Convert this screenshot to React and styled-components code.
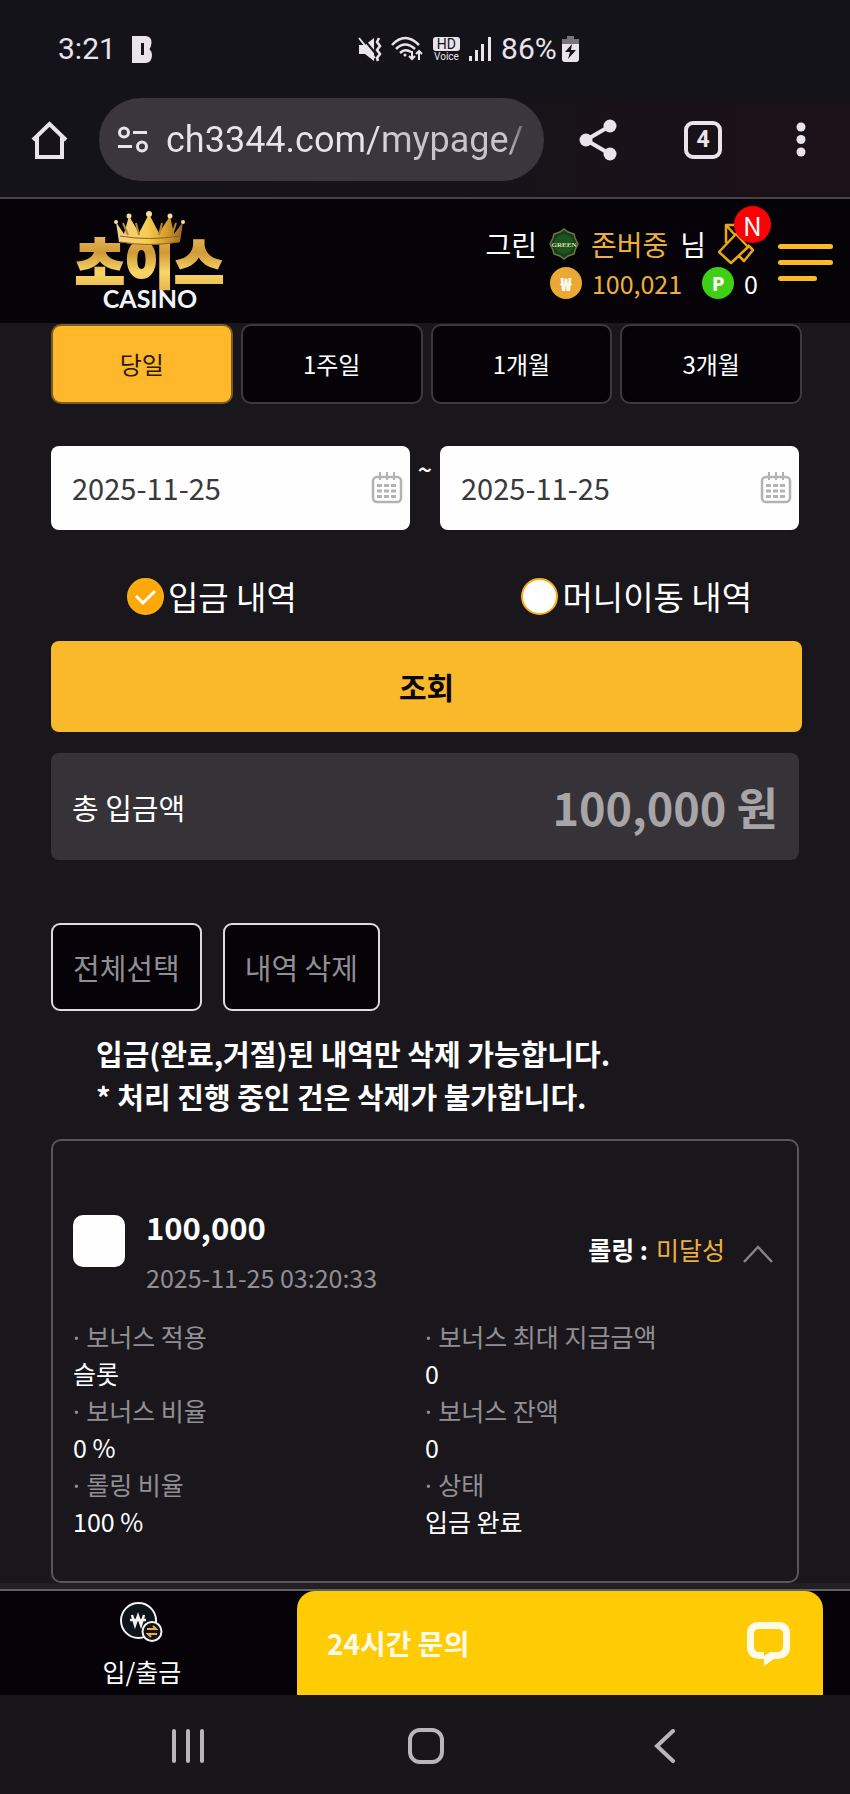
import React, { useState } from "react";
import styled, { createGlobalStyle, css } from "styled-components";

const color = {
  page: "#19171c",
  chrome: "#141319",
  black: "#050308",
  gold: "#f9b92a",
  amber: "#eeb03c",
  muted: "#918f93",
  icon: "#e9e4ec",
};

const GlobalStyle = createGlobalStyle`
  *, *::before, *::after { box-sizing: border-box; }
  body {
    margin: 0;
    background: ${color.page};
    color: #fff;
    font-family: "Noto Sans CJK KR", sans-serif;
    font-size: 25px;
  }
  button, input { font: inherit; color: inherit; margin: 0; }
  button { padding: 0; border: 0; background: none; cursor: pointer; }
  svg { display: block; flex: none; }
  p, h1, h2, dl, dd, dt { margin: 0; font-weight: inherit; font-size: inherit; }
`;

const Phone = styled.div`
  display: flex;
  flex-direction: column;
  min-height: 100vh;
`;

/* ---------- system status ---------- */
const StatusBar = styled.div`
  display: flex;
  align-items: center;
  height: 98px;
  padding: 0 58px;
  background: ${color.chrome};
  color: ${color.icon};
  font: 30px/36px Roboto, sans-serif;
`;
const Clock = styled.time`
  margin-right: 16px;
`;
const StatusIcons = styled.div`
  display: flex;
  align-items: center;
  gap: 9px;
  margin-left: 206px;
`;
const Voice = styled.div`
  display: grid;
  justify-items: center;
  font-size: 10px;
  line-height: 11px;
`;
const Hd = styled.span`
  padding: 0 4px;
  border-radius: 3px;
  background: ${color.icon};
  color: ${color.chrome};
  font-size: 14px;
  line-height: 14px;
`;
const Battery = styled.div`
  display: flex;
  align-items: center;
  gap: 5px;
`;

/* ---------- browser bar ---------- */
const BrowserBar = styled.div`
  display: flex;
  align-items: center;
  height: 101px;
  padding: 0 44px 16px 31px;
  border-bottom: 2px solid #45424a;
  background: linear-gradient(90deg, ${color.chrome} 20%, #1b1119);
  color: ${color.icon};
`;
const AddressPill = styled.div`
  display: flex;
  flex: 1;
  align-items: center;
  gap: 18px;
  min-width: 0;
  height: 83px;
  margin: 0 35px 0 31px;
  padding: 0 16px 0 18px;
  border-radius: 42px;
  background: #3b353d;
`;
const Address = styled.input`
  flex: 1;
  min-width: 0;
  padding: 0;
  border: 0;
  outline: 0;
  background: linear-gradient(90deg, ${color.icon} 55%, #c9c3cb 65%, #c9c3cb 94%, #5a555c);
  background-clip: text;
  color: transparent;
  font: 36px/44px Roboto, sans-serif;
`;
const BrowserActions = styled.div`
  display: flex;
  align-items: center;
`;
const TabCount = styled.button`
  width: 38px;
  height: 38px;
  margin: 0 74px 0 66px;
  border: 4px solid ${color.icon};
  border-radius: 9px;
  font: bold 23px/30px Roboto, sans-serif;
`;

/* ---------- site header ---------- */
const Header = styled.header`
  display: flex;
  justify-content: space-between;
  height: 124px;
  padding: 0 17px 0 75px;
  background: ${color.black};
`;
const Logo = styled.a`
  padding-top: 12px;
`;
const Account = styled.div`
  display: flex;
  gap: 20px;
`;
const AccountInfo = styled.div`
  display: grid;
  align-content: start;
  justify-items: end;
  padding-top: 24px;
`;
const NameRow = styled.div`
  display: flex;
  align-items: center;
  height: 42px;
  gap: 12px;
  padding-right: 4px;
  font-size: 28px;
`;
const BalanceRow = styled.div`
  display: flex;
  align-items: center;
  height: 36px;
  font-size: 25px;
  gap: 10px;
`;
const Gold = styled.span`
  color: ${color.amber};
`;
const Coin = styled.span`
  display: grid;
  place-items: center;
  width: 32px;
  height: 32px;
  margin-left: ${(p) => (p.$spaced ? "10px" : 0)};
  border-radius: 50%;
  background: ${(p) => p.$fill};
  font: 900 18px/32px "Noto Sans CJK KR", sans-serif;
`;
const CouponButton = styled.button`
  position: relative;
`;
const NewBadge = styled.span`
  position: absolute;
  right: -17px;
  top: -17px;
  width: 37px;
  height: 37px;
  border-radius: 50%;
  background: #fb0306;
  color: #fff;
  font-size: 26px;
  line-height: 37px;
`;
const MenuButton = styled.button`
  display: grid;
  align-content: start;
  gap: 11px;
  width: 55px;
  padding-top: 45px;
`;
const MenuLine = styled.span`
  width: ${(p) => (p.$short ? "70%" : "100%")};
  height: 5px;
  border-radius: 3px;
  background: ${color.gold};
`;

/* ---------- search form ---------- */
const Main = styled.main`
  flex: 1;
  padding: 1px 51px 0;
`;
const Periods = styled.div`
  display: grid;
  grid-template-columns: repeat(4, 1fr);
  gap: 8px;
  margin-right: -3px;
`;
const Period = styled.button`
  height: 80px;
  padding-bottom: 2px;
  border: 2px solid #3c3a3e;
  border-radius: 10px;
  background: ${color.black};
  color: #fff;
  font-size: 24px;
  ${(p) =>
    p.$active &&
    css`
      border-color: #7c5c20;
      background: #ffb72b;
      color: #2a1a08;
    `}
`;
const DateRange = styled.div`
  display: flex;
  margin-top: 42px;
`;
const Tilde = styled.span`
  width: 30px;
  color: #fff;
  font-weight: 500;
  text-align: center;
  line-height: 44px;
`;
const DateField = styled.label`
  display: flex;
  flex: 1;
  align-items: center;
  min-width: 0;
  height: 84px;
  padding: 0 7px 0 21px;
  border-radius: 8px;
  background: #fefefe;
`;
const DateInput = styled.input`
  flex: 1;
  min-width: 0;
  padding: 0 0 2px;
  border: 0;
  outline: 0;
  background: none;
  color: #3a383b;
  font-size: 29px;
`;
const Kinds = styled.div`
  display: flex;
  height: 111px;
  padding: 45px 47px 0 76px;
  justify-content: space-between;
  align-items: flex-start;
`;
const Kind = styled.label`
  display: flex;
  align-items: center;
  gap: 4px;
  height: 42px;
  font-size: 33px;
`;
const Radio = styled.input`
  appearance: none;
  width: 37px;
  height: 37px;
  border: 2px solid #f7ae1c;
  border-radius: 50%;
  background: #fff;
  &:checked {
    background: #fca908
      url("data:image/svg+xml,%3Csvg xmlns='http://www.w3.org/2000/svg' viewBox='0 0 33 33'%3E%3Cpath d='M7 16l7 7 12-12' fill='none' stroke='%23fff' stroke-width='3'/%3E%3C/svg%3E")
      center / 33px no-repeat;
  }
`;
const SearchButton = styled.button`
  display: block;
  width: calc(100% + 3px);
  height: 91px;
  padding-bottom: 2px;
  border-radius: 8px;
  background: ${color.gold};
  color: #0b0703;
  font-size: 30px;
  font-weight: bold;
`;
const Total = styled.section`
  display: flex;
  justify-content: space-between;
  align-items: center;
  height: 107px;
  margin-top: 21px;
  padding: 0 21px;
  border-radius: 8px;
  background: #353337;
  font-size: 29px;
`;
const TotalAmount = styled.strong`
  color: #a7a5a8;
  font-size: 45px;
`;

/* ---------- history ---------- */
const ListActions = styled.div`
  display: flex;
  gap: 21px;
  margin-top: 63px;
`;
const OutlineButton = styled.button`
  height: 88px;
  padding: 0 20px;
  border: 2px solid #dddbdf;
  border-radius: 9px;
  background: ${color.black};
  color: ${color.muted};
  font-size: 29px;
`;
const Notice = styled.p`
  padding: 21px 45px;
  font-size: 29px;
  font-weight: bold;
  line-height: 43px;
`;
const Card = styled.article`
  min-height: 444px;
  padding: 74px 20px 0;
  border: 2px solid #58565a;
  border-radius: 10px;
`;
const CardHead = styled.div`
  display: flex;
`;
const Check = styled.input`
  appearance: none;
  width: 52px;
  height: 52px;
  border-radius: 10px;
  background: #fefefe;
`;
const Deposit = styled.div`
  display: grid;
  flex: 1;
  margin-left: 21px;
`;
const Amount = styled.strong`
  font-size: 31px;
  line-height: 24px;
`;
const Stamp = styled.time`
  margin-top: 20px;
  color: ${color.muted};
  line-height: 37px;
`;
const Rolling = styled.button`
  display: flex;
  align-items: center;
  gap: 8px;
  height: 68px;
  padding-right: 4px;
  & svg { margin: 10px 0 0 10px; }
`;
const Details = styled.dl`
  display: grid;
  grid-template-columns: 1fr 1fr;
  margin-top: 22px;
`;
const Term = styled.dt`
  height: 37px;
  color: ${color.muted};
  line-height: 37px;
  &::before {
    content: "· ";
    font-family: "Noto Sans", sans-serif;
  }
`;
const Value = styled.dd`
  height: 37px;
  line-height: 37px;
`;

/* ---------- bottom bars ---------- */
const Dock = styled.footer`
  display: grid;
  grid-template-columns: 35fr 62fr;
  height: 112px;
  padding-right: 27px;
  border-top: 6px solid #222025;
  background: ${color.black};
  box-shadow: inset 0 2px #626065;
`;
const DockLink = styled.a`
  display: grid;
  justify-items: center;
  align-content: start;
  gap: 14px;
  padding: 13px 13px 0 0;
  color: #fff;
  text-decoration: none;
  line-height: 30px;
`;
const ChatButton = styled.button`
  display: flex;
  align-items: center;
  justify-content: space-between;
  height: 104px;
  margin-top: 2px;
  padding: 0 33px 0 30px;
  border-radius: 18px 18px 0 0;
  background: #ffcb05;
  color: #fffbe8;
  font-size: 28px;
  font-weight: bold;
  line-height: 36px;
`;
const SystemNav = styled.nav`
  display: grid;
  grid-template-columns: 1fr 1fr 1fr;
  align-items: center;
  height: 99px;
  padding: 3px 66px 0 69px;
  background: #18161a;
`;
const NavButton = styled.button`
  display: grid;
  place-items: center;
  color: #b9b6bb;
`;

const HomeIcon = () => (
  <svg width="37" height="38" viewBox="0 0 37 38" fill="none" stroke="currentColor" strokeWidth="4">
    <path d="M2 19 18.500 3 35 19M6 16v20h25V16" />
  </svg>
);
const SiteIcon = () => (
  <svg width="31" height="27" viewBox="0 0 31 27" fill="none" stroke="currentColor" strokeWidth="3">
    <circle cx="7" cy="6.500" r="4.500" />
    <circle cx="25" cy="20.500" r="4.500" />
    <path d="M16 6.500h14M1 20.500h14" />
  </svg>
);
const ShareIcon = () => (
  <svg width="39" height="42" viewBox="0 0 39 42">
    <path d="M31 7 7 21l24 14" fill="none" stroke="currentColor" strokeWidth="4" />
    <g fill="currentColor">
      <circle cx="31" cy="7" r="6.500" />
      <circle cx="7" cy="21" r="6.500" />
      <circle cx="31" cy="35" r="6.500" />
    </g>
  </svg>
);
const MoreIcon = () => (
  <svg width="10" height="35" viewBox="0 0 10 35" fill="currentColor">
    <circle cx="5" cy="5" r="4.500" />
    <circle cx="5" cy="17.500" r="4.500" />
    <circle cx="5" cy="30" r="4.500" />
  </svg>
);
const BrandIcon = () => (
  <svg width="20" height="27" viewBox="0 0 20 27">
    <path d="M0 0h14q6 1 5.500 7-.5 4-2 6 2 2 2.500 6 0 7-6 8H0V0Z" fill="currentColor" />
    <path d="M9 7h3v12H9Z" fill={color.chrome} />
  </svg>
);
const MuteIcon = () => (
  <svg width="24" height="25" viewBox="0 0 24 25">
    <path d="M1 8h6l9-7v23L7 17H1Z" fill="currentColor" />
    <path d="m4 0 14 17" stroke={color.chrome} strokeWidth="2" />
    <path d="m1 1 16 20" stroke="currentColor" strokeWidth="2" />
    <path d="m21 1-2 4 3 4-3 4 3 4-3 4 1 3" fill="none" stroke="currentColor" strokeWidth="2.500" />
  </svg>
);
const WifiIcon = () => (
  <svg width="33" height="26" viewBox="0 0 33 26" fill="none" stroke="currentColor" strokeWidth="2.500">
    <path d="M1 9q13-14 27 0M5 13q9-9 19 0M9 17q5-5 11-1" />
    <circle cx="14" cy="19" r="1.500" fill="currentColor" stroke="none" />
    <path d="M21 15v8m-3-3 3 3 3-3M28 24v-9m-3 3 3-3 3 3" strokeWidth="2" />
  </svg>
);
const SignalIcon = () => (
  <svg width="23" height="24" viewBox="0 0 23 24" fill="currentColor">
    <path d="M0 19h3v5H0ZM6 13h3v11H6ZM12 7h3v17h-3ZM19 0h3v24h-3Z" />
  </svg>
);
const BatteryIcon = () => (
  <svg width="17" height="26" viewBox="0 0 17 26">
    <path d="M5 0h7v3h5v6H0V3h5Z" fill="#77747b" />
    <path d="M0 8h17v15q0 3-3 3H3q-3 0-3-3Z" fill="currentColor" />
    <path d="m10 8-7 8h5l-2 7 8-9H9Z" fill={color.chrome} />
  </svg>
);

const LogoArt = () => (
  <svg width="150" height="106" viewBox="0 0 150 106" role="img" aria-label="초이스 CASINO">
    <defs>
      <linearGradient id="goldFill" x1="0" y1="0" x2="0" y2="1">
        <stop offset=".2" stopColor="#e6b653" />
        <stop offset=".4" stopColor="#d09a38" />
        <stop offset=".65" stopColor="#f8d668" />
        <stop offset="1" stopColor="#dfa63a" />
      </linearGradient>
      <linearGradient id="crownFill" x1="0" y1="0" x2="1" y2="0">
        <stop offset="0" stopColor="#f4cf8e" />
        <stop offset=".45" stopColor="#f7cf52" />
        <stop offset=".75" stopColor="#d69d2c" />
        <stop offset="1" stopColor="#9c6820" />
      </linearGradient>
    </defs>
    <text x="0" y="73" fontFamily="Noto Sans CJK KR" fontWeight="900" fontSize="54" fill="url(#goldFill)" stroke="url(#goldFill)" strokeWidth="2">초이스</text>
    <path d="M41 11 49 23 54 5 64 22 74 3 84 22 95 5 99 23 108 11 105 31Q74 37 44 31Z" fill="url(#crownFill)" />
    <path d="m48 12 5 12M61 12l3 12M87 12l-3 12M101 12l-4 12" stroke="#b98432" strokeWidth="2" />
    <path d="M45 25Q74 30 105 25M45 31Q74 36 104 31" fill="none" stroke="#8d5f1c" strokeWidth="1" />
    <g fill="#f6dca0">
      <circle cx="41" cy="11" r="2" /><circle cx="54" cy="5" r="2.500" /><circle cx="74" cy="3" r="3" />
      <circle cx="95" cy="5" r="2.500" /><circle cx="108" cy="11" r="2" />
    </g>
    <text x="75" y="97" textAnchor="middle" fontFamily="Lato" fontWeight="bold" fontSize="25" fill="#f4f4f8">CASINO</text>
  </svg>
);
const GreenBadge = () => (
  <svg width="30" height="32" viewBox="0 0 30 32">
    <path d="m15 1 4 3 6 2 1 4 3 6-3 6-1 4-6 2-4 3-4-3-6-2-1-4-3-6 3-6 1-4 6-2Z" fill="#163c19" stroke="#70773c" strokeWidth="1.500" />
    <circle cx="15" cy="16" r="10" fill="#1d5423" />
    <text x="15" y="19" textAnchor="middle" fontFamily="Liberation Serif" fontWeight="bold" fontSize="7" fill="#dce0a0">GREEN</text>
  </svg>
);
const CouponIcon = () => (
  <svg width="36" height="42" viewBox="0 0 36 42" fill="none" stroke="#e9a713" strokeWidth="2.500" strokeLinejoin="round">
    <path d="M8 20V2h17M8 2l9 10M1 29 18 11l12 13-17 16ZM21 33l5 5 9-11-5-5" />
  </svg>
);
const CalendarIcon = () => (
  <svg width="32" height="32" viewBox="0 0 32 32" fill="none" stroke="#b3b2b4" strokeWidth="2.500">
    <rect x="2" y="5" width="28" height="25" rx="4" />
    <path d="M9 0v8M16 0v8M23 0v8" strokeWidth="2" />
    <path d="M6 13.500h20M6 19h20M6 24.500h20" strokeWidth="3" strokeDasharray="5 2" />
  </svg>
);
const ChevronUp = () => (
  <svg width="30" height="18" viewBox="0 0 30 18" fill="none" stroke="#858387" strokeWidth="2.500">
    <path d="M1 17 15 2l14 15" />
  </svg>
);
const CashIcon = () => (
  <svg width="43" height="40" viewBox="0 0 43 40" fill="none" stroke="#f3f3f3" strokeWidth="2">
    <circle cx="18.500" cy="18.500" r="17.500" fill="#0e1419" />
    <path d="m12 13 3 10 3-9 3 9 3-10M10 18h16" strokeWidth="2.500" />
    <circle cx="32" cy="29.500" r="9.500" fill="#0e1419" />
    <path d="M27 27h9l-3-3M37 32h-9l3 3" stroke="#f0ae35" />
  </svg>
);
const ChatIcon = () => (
  <svg width="43" height="48" viewBox="0 0 43 48">
    <path d="M12 3h19q12 0 12 12v13q0 11-12 12h-4l-10 7v-7h-5Q0 39 0 28V15Q0 3 12 3Z" fill="#fffbe8" />
    <path d="M12 10h19q5 0 5 5v12q0 6-6 6h-7l-6 4v-4h-5q-5 0-5-6V15q0-5 5-5Z" fill="#ffcb05" />
  </svg>
);
const RecentsIcon = () => (
  <svg width="34" height="34" viewBox="0 0 34 34" stroke="currentColor" strokeWidth="4" strokeLinecap="round">
    <path d="M3 2v30M17 2v30M31 2v30" />
  </svg>
);
const HomeSquare = () => (
  <svg width="36" height="36" viewBox="0 0 36 36" fill="none" stroke="currentColor" strokeWidth="4">
    <rect x="2" y="2" width="32" height="32" rx="10" />
  </svg>
);
const BackIcon = () => (
  <svg width="22" height="34" viewBox="0 0 22 34" fill="none" stroke="currentColor" strokeWidth="4" strokeLinecap="round">
    <path d="M19 2 3 17l16 15" />
  </svg>
);

const periods = ["당일", "1주일", "1개월", "3개월"];
const kinds = ["입금 내역", "머니이동 내역"];
const details = [
  ["보너스 적용", "슬롯"],
  ["보너스 최대 지급금액", "0"],
  ["보너스 비율", "0 %"],
  ["보너스 잔액", "0"],
  ["롤링 비율", "100 %"],
  ["상태", "입금 완료"],
];

export default function App() {
  const [period, setPeriod] = useState(periods[0]);
  const [kind, setKind] = useState(kinds[0]);

  return (
    <Phone>
      <GlobalStyle />
      <StatusBar>
        <Clock>3:21</Clock>
        <BrandIcon />
        <StatusIcons>
          <MuteIcon />
          <WifiIcon />
          <Voice><Hd>HD</Hd>Voice</Voice>
          <SignalIcon />
          <Battery>86%<BatteryIcon /></Battery>
        </StatusIcons>
      </StatusBar>

      <BrowserBar>
        <button aria-label="홈"><HomeIcon /></button>
        <AddressPill>
          <SiteIcon />
          <Address aria-label="주소" defaultValue="ch3344.com/mypage/" />
        </AddressPill>
        <BrowserActions>
          <button aria-label="공유"><ShareIcon /></button>
          <TabCount>4</TabCount>
          <button aria-label="더보기"><MoreIcon /></button>
        </BrowserActions>
      </BrowserBar>

      <Header>
        <Logo href="#"><LogoArt /></Logo>
        <Account>
          <AccountInfo>
            <NameRow>
              <span>그린</span>
              <GreenBadge />
              <Gold>존버중</Gold>
              <span>님</span>
              <CouponButton aria-label="쿠폰"><CouponIcon /><NewBadge>N</NewBadge></CouponButton>
            </NameRow>
            <BalanceRow>
              <Coin $fill="#e9a934">₩</Coin>
              <Gold>100,021</Gold>
              <Coin $fill="#3fd015" $spaced>P</Coin>
              <span>0</span>
            </BalanceRow>
          </AccountInfo>
          <MenuButton aria-label="메뉴">
            <MenuLine /><MenuLine /><MenuLine $short />
          </MenuButton>
        </Account>
      </Header>

      <Main>
        <Periods>
          {periods.map((p) => (
            <Period key={p} $active={p === period} onClick={() => setPeriod(p)}>{p}</Period>
          ))}
        </Periods>

        <DateRange>
          <DateField><DateInput aria-label="시작일" defaultValue="2025-11-25" /><CalendarIcon /></DateField>
          <Tilde>~</Tilde>
          <DateField><DateInput aria-label="종료일" defaultValue="2025-11-25" /><CalendarIcon /></DateField>
        </DateRange>

        <Kinds>
          {kinds.map((k) => (
            <Kind key={k}>
              <Radio type="radio" name="kind" checked={k === kind} onChange={() => setKind(k)} />
              {k}
            </Kind>
          ))}
        </Kinds>

        <SearchButton>조회</SearchButton>

        <Total>
          <span>총 입금액</span>
          <TotalAmount>100,000 원</TotalAmount>
        </Total>

        <ListActions>
          <OutlineButton>전체선택</OutlineButton>
          <OutlineButton>내역 삭제</OutlineButton>
        </ListActions>
        <Notice>
          입금(완료,거절)된 내역만 삭제 가능합니다.
          <br />* 처리 진행 중인 건은 삭제가 불가합니다.
        </Notice>

        <Card>
          <CardHead>
            <Check type="checkbox" aria-label="내역 선택" />
            <Deposit>
              <Amount>100,000</Amount>
              <Stamp>2025-11-25 03:20:33</Stamp>
            </Deposit>
            <Rolling aria-expanded="true">
              <strong>롤링 :</strong>
              <Gold>미달성</Gold>
              <ChevronUp />
            </Rolling>
          </CardHead>
          <Details>
            {details.map(([term, value]) => (
              <div key={term}>
                <Term>{term}</Term>
                <Value>{value}</Value>
              </div>
            ))}
          </Details>
        </Card>
      </Main>

      <Dock>
        <DockLink href="#"><CashIcon />입/출금</DockLink>
        <ChatButton>24시간 문의<ChatIcon /></ChatButton>
      </Dock>
      <SystemNav>
        <NavButton aria-label="최근 앱"><RecentsIcon /></NavButton>
        <NavButton aria-label="홈 화면"><HomeSquare /></NavButton>
        <NavButton aria-label="뒤로"><BackIcon /></NavButton>
      </SystemNav>
    </Phone>
  );
}
